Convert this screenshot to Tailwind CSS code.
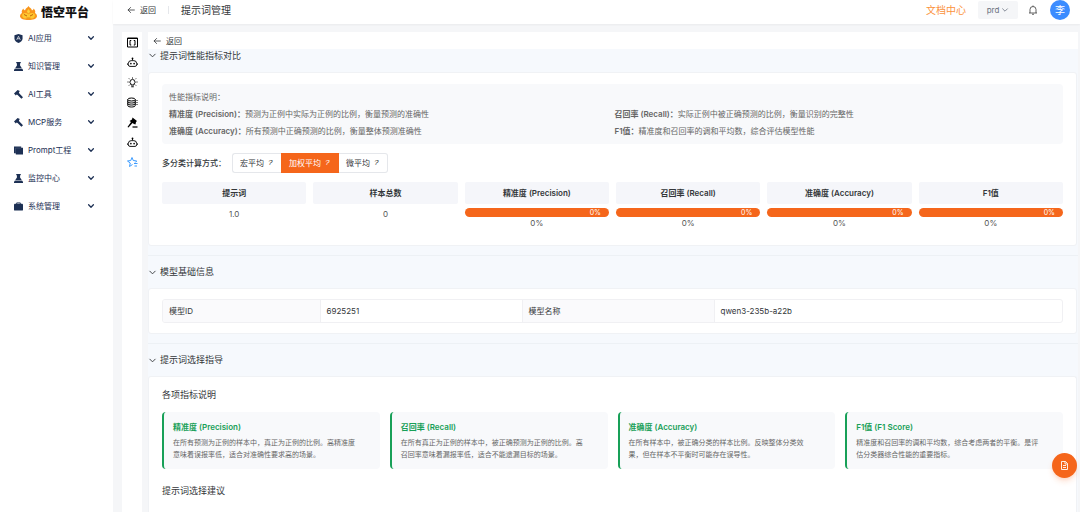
<!DOCTYPE html>
<html lang="zh-CN">
<head>
    <meta charset="UTF-8">
    <meta name="viewport" content="width=device-width, initial-scale=1.0">
    <title>悟空平台 - 提示词管理</title>
    <script src="https://cdn.jsdelivr.net/npm/@tailwindcss/browser@4"></script>
</head>
<body class="flex min-h-screen bg-[#f5f6f8] font-['Inter','Noto_Sans_CJK_SC',sans-serif] text-[8px] leading-3 text-[#333639]">
    <!-- Shared icons -->
    <svg class="hidden">
        <symbol id="chevron" viewBox="0 0 10 10"><path d="M2 3.5l3 3 3-3" fill="none" stroke="currentColor" stroke-linecap="round" stroke-linejoin="round"/></symbol>
        <symbol id="arrow" viewBox="0 0 10 10"><path d="M9.2 5H1.5M4.5 1.8L1.3 5l3.2 3.2" fill="none" stroke="currentColor" stroke-linecap="round" stroke-linejoin="round"/></symbol>
        <symbol id="hammer" viewBox="0 0 20 20"><path d="M0 8L8 0l5 2-2 3 .5 2L20 16l-3.500 3.500L8 11l-2-1-2 2z" fill="currentColor"/></symbol>
        <symbol id="flask" viewBox="0 0 20 20"><path d="M5 0h10v2.500h-1.500V8l4 6h-15l4-6V2.500H5zM1.500 15h17L20 17.500V20H0v-2.500z" fill="currentColor"/></symbol>
        <symbol id="robot" viewBox="0 0 24 24"><path d="M12 7V3M6.500 20.500h11a3.500 3.500 0 0 0 3.500-3.500v-3a6 6 0 0 0-6-6H9a6 6 0 0 0-6 6v3a3.500 3.500 0 0 0 3.500 3.500zM1 14v3M23 14v3" fill="none" stroke="currentColor" stroke-width="2"/><circle cx="12" cy="3" r="2" fill="currentColor"/><circle cx="8.500" cy="14.500" r="1.800" fill="currentColor"/><circle cx="15.500" cy="14.500" r="1.800" fill="currentColor"/></symbol>
    </svg>

    <!-- Sidebar -->
    <aside class="w-[113px] shrink-0 bg-white">
        <div class="flex h-6 items-center gap-1 pl-5 pt-[2px]">
            <svg class="h-[14px] w-[17px]" viewBox="0 0 34 28">
                <path d="M17 0c2 4 6 4 7 9 2-1 3-2 3-4 4 4 4 6 3 9 3 2 4 4 4 7-1 5-8 7-17 7S1 26 0 21c0-3 1-5 4-7-1-3-1-5 3-9 0 2 1 3 3 4 1-5 5-5 7-9z" fill="#f9951b"/>
                <path d="M5 16c4-3 9-2 12 1 3-3 8-4 12-1 2 4 0 8-4 9H9c-4-1-6-5-4-9z" fill="#fdc82f"/>
                <path d="M8 17l6 3M26 17l-6 3" stroke="#c2650f" stroke-width="2" fill="none"/>
                <path d="M13 24h8" stroke="#e07b12" stroke-width="1.500"/>
                <path d="M17 6c1 2 3 3 3 6l-3 3-3-3c0-3 2-4 3-6z" fill="#fdd23c"/>
            </svg>
            <span class="text-xs font-black text-[#111]">悟空平台</span>
        </div>
        <nav class="text-[#1d3054]">
            <a href="#" class="flex h-7 items-center pl-[14px] pr-[18px]">
                <svg class="mr-[5px] size-[9px]" viewBox="0 0 20 20"><path d="M10 0l9 3v7c0 5-4 8-9 10-5-2-9-5-9-10V3z" fill="currentColor"/><path d="M6 13l4-8 4 8M7.500 10.500h5" stroke="#fff" stroke-width="1.500" fill="none"/></svg>
                <span class="flex-1">AI应用</span>
                <svg class="size-2" stroke-width="1.600"><use href="#chevron"/></svg>
            </a>
            <a href="#" class="flex h-7 items-center pl-[14px] pr-[18px]">
                <svg class="mr-[5px] size-[9px]"><use href="#flask"/></svg>
                <span class="flex-1">知识管理</span>
                <svg class="size-2" stroke-width="1.600"><use href="#chevron"/></svg>
            </a>
            <a href="#" class="flex h-7 items-center pl-[14px] pr-[18px]">
                <svg class="mr-[5px] size-[9px]"><use href="#hammer"/></svg>
                <span class="flex-1">AI工具</span>
                <svg class="size-2" stroke-width="1.600"><use href="#chevron"/></svg>
            </a>
            <a href="#" class="flex h-7 items-center pl-[14px] pr-[18px]">
                <svg class="mr-[5px] size-[9px]"><use href="#hammer"/></svg>
                <span class="flex-1">MCP服务</span>
                <svg class="size-2" stroke-width="1.600"><use href="#chevron"/></svg>
            </a>
            <a href="#" class="flex h-7 items-center pl-[14px] pr-[18px]">
                <svg class="mr-[5px] size-[9px]" viewBox="0 0 20 20"><path d="M0 1h16v3h4v15H4v-3H0z" fill="currentColor"/><path d="M3.500 16V4.500H16" stroke="#5b6a86" fill="none"/></svg>
                <span class="flex-1">Prompt工程</span>
                <svg class="size-2" stroke-width="1.600"><use href="#chevron"/></svg>
            </a>
            <a href="#" class="flex h-7 items-center pl-[14px] pr-[18px]">
                <svg class="mr-[5px] size-[9px]"><use href="#flask"/></svg>
                <span class="flex-1">监控中心</span>
                <svg class="size-2" stroke-width="1.600"><use href="#chevron"/></svg>
            </a>
            <a href="#" class="flex h-7 items-center pl-[14px] pr-[18px]">
                <svg class="mr-[5px] size-[9px]" viewBox="0 0 20 20"><rect y="4" width="20" height="15" rx="2" fill="currentColor"/><path d="M6 5V2h8v3" stroke="currentColor" stroke-width="2" fill="none"/></svg>
                <span class="flex-1">系统管理</span>
                <svg class="size-2" stroke-width="1.600"><use href="#chevron"/></svg>
            </a>
        </nav>
    </aside>

    <div class="flex min-w-0 flex-1 flex-col">
        <!-- Header -->
        <header class="flex h-6 items-center bg-white pb-1 pl-[14px] pr-[10px] shadow-xs">
            <button class="flex items-center gap-[5px]"><svg class="size-2"><use href="#arrow"/></svg>返回</button>
            <span class="mx-3 h-2 w-px bg-[#e5e7eb]"></span>
            <h1 class="text-[10px]">提示词管理</h1>
            <a href="#" class="ml-auto text-[10px] text-[#fb923c]">文档中心</a>
            <button class="ml-3 flex h-[18px] w-10 items-center justify-center gap-[2px] rounded-xs bg-[#f5f6f8] text-[#6b7280]">prd<svg class="size-2"><use href="#chevron"/></svg></button>
            <button class="ml-2 p-[2px]" aria-label="通知">
                <svg class="size-[10px]" viewBox="0 0 20 20" fill="none" stroke="#444" stroke-width="1.700"><path d="M2 16h16M4 16V9a6 6 0 0 1 12 0v7M10 3V1M8 18.500h4"/></svg>
            </button>
            <span class="ml-[10px] flex size-5 items-center justify-center rounded-full bg-[#3b8cff] text-[10px] text-white">李</span>
        </header>

        <div class="flex flex-1 pl-[9px] pr-[2px] pt-2">
            <!-- Tool rail -->
            <nav class="flex w-5 shrink-0 flex-col items-center bg-white text-black">
                <a href="#" class="flex h-5 items-center" aria-label="变量"><svg class="size-[11px]" viewBox="0 0 22 22" fill="none" stroke="currentColor" stroke-width="2"><path d="M1 2h20v18H1zM1 3h20M8.500 7H6v9h2.500M13.500 7H16v9h-2.500"/></svg></a>
                <a href="#" class="flex h-5 items-center" aria-label="智能体"><svg class="size-[11px]"><use href="#robot"/></svg></a>
                <a href="#" class="flex h-5 items-center" aria-label="提示"><svg class="size-[11px]" viewBox="0 0 22 22" fill="none" stroke="currentColor" stroke-width="2"><path d="M8 16v-2a5 5 0 1 1 6 0v2zM8.500 19.500h5M11 1v2M1 10h2M19 10h2M4 3l1.500 1.500M18 3l-1.500 1.500M4 17l1.500-1.500M18 17l-1.500-1.500"/></svg></a>
                <a href="#" class="flex h-5 items-center" aria-label="数据"><svg class="size-[11px]" viewBox="0 0 22 22" fill="none" stroke="currentColor" stroke-width="2"><ellipse cx="9" cy="5" rx="7.500" ry="3"/><path d="M1.500 5v12c0 4 15 4 15 0V5M1.500 9c0 4 15 4 15 0M1.500 13c0 4 15 4 15 0M19 7h2M19 11h2M19 15h2"/></svg></a>
                <a href="#" class="flex h-5 items-center" aria-label="评测"><svg class="size-[11px]" viewBox="0 0 22 22"><path d="M11 1l9 7-2 2-1 5-3-1-3-2-8 9-2-1 7-10-3-2 5-3z" fill="currentColor"/><path d="M11 20h10" stroke="currentColor" stroke-width="2.500"/></svg></a>
                <a href="#" class="flex h-5 items-center" aria-label="机器人"><svg class="size-[11px]"><use href="#robot"/></svg></a>
                <a href="#" class="flex h-5 items-center text-[#3b9bff]" aria-label="收藏"><svg class="size-[11px]" viewBox="0 0 22 22" fill="none" stroke="currentColor" stroke-width="2" stroke-linejoin="round"><path d="M11 15l-6 4 1.500-7L1 8l6.500-1L10 1l2.500 6 7 1-3 3M14 13h7M15 18h5"/></svg></a>
            </nav>

            <!-- Content -->
            <main class="ml-[6px] flex min-w-0 flex-1 flex-col bg-[#f6f9fd]">
                <div class="flex h-[17px] items-center bg-white pl-[5px]">
                    <button class="flex items-center gap-[5px]"><svg class="size-2"><use href="#arrow"/></svg>返回</button>
                </div>

                <!-- Metric comparison -->
                <section class="pb-[9px]">
                    <button class="flex h-[23px] items-start gap-[3px] text-[9px] leading-[14px]"><svg class="mt-[2px] size-[9px]"><use href="#chevron"/></svg>提示词性能指标对比</button>
                    <div class="mr-px rounded-[3px] border border-[#f0f2f5] bg-white px-[13px] pb-4 pt-[11px]">
                        <div class="rounded-sm bg-[#f8f9fb] px-[7px] pb-[4px] pt-[5px] leading-[17px] text-[#666]">
                            <p>性能指标说明：</p>
                            <div class="grid grid-cols-2 gap-x-1">
                                <p><strong class="font-semibold">精准度 (Precision)：</strong>预测为正例中实际为正例的比例，衡量预测的准确性</p>
                                <p><strong class="font-semibold">召回率 (Recall)：</strong>实际正例中被正确预测的比例，衡量识别的完整性</p>
                                <p><strong class="font-semibold">准确度 (Accuracy)：</strong>所有预测中正确预测的比例，衡量整体预测准确性</p>
                                <p><strong class="font-semibold">F1值：</strong>精准度和召回率的调和平均数，综合评估模型性能</p>
                            </div>
                        </div>

                        <div class="mt-[9px] flex h-5 items-center" role="radiogroup" aria-labelledby="averageLabel">
                            <span id="averageLabel" class="w-[70px] font-medium">多分类计算方式：</span>
                            <label class="flex h-full items-center gap-1 rounded-l-[3px] border border-r-0 border-[#e5e7eb] px-[7px]">
                                <input type="radio" name="average" class="sr-only">宏平均<i class="w-[6px] font-['Liberation_Mono',monospace]">?</i>
                            </label>
                            <label class="flex h-full items-center gap-1 bg-[#f5661b] px-2 text-white">
                                <input type="radio" name="average" class="sr-only" checked>加权平均<i class="w-[6px] font-['Liberation_Mono',monospace]">?</i>
                            </label>
                            <label class="flex h-full items-center gap-1 rounded-r-[3px] border border-l-0 border-[#e5e7eb] px-[7px]">
                                <input type="radio" name="average" class="sr-only">微平均<i class="w-[6px] font-['Liberation_Mono',monospace]">?</i>
                            </label>
                        </div>

                        <div class="-mx-[7px] mt-[9px]">
                            <table class="w-full table-fixed border-separate border-spacing-x-[7px] border-spacing-y-0 text-center">
                                <thead>
                                    <tr class="h-[22px]">
                                        <th class="rounded-xs bg-[#f5f6fa] font-semibold">提示词</th>
                                        <th class="rounded-xs bg-[#f5f6fa] font-semibold">样本总数</th>
                                        <th class="rounded-xs bg-[#f5f6fa] font-semibold">精准度 (Precision)</th>
                                        <th class="rounded-xs bg-[#f5f6fa] font-semibold">召回率 (Recall)</th>
                                        <th class="rounded-xs bg-[#f5f6fa] font-semibold">准确度 (Accuracy)</th>
                                        <th class="rounded-xs bg-[#f5f6fa] font-semibold">F1值</th>
                                    </tr>
                                </thead>
                                <tbody>
                                    <tr class="align-top text-[#555]">
                                        <td class="pt-1">1.0</td>
                                        <td class="pt-1">0</td>
                                        <td class="pt-1"><div class="h-[9px] rounded-full bg-[#f5661b] pr-2 text-right text-[7px] leading-[9px] text-white">0%</div>0%</td>
                                        <td class="pt-1"><div class="h-[9px] rounded-full bg-[#f5661b] pr-2 text-right text-[7px] leading-[9px] text-white">0%</div>0%</td>
                                        <td class="pt-1"><div class="h-[9px] rounded-full bg-[#f5661b] pr-2 text-right text-[7px] leading-[9px] text-white">0%</div>0%</td>
                                        <td class="pt-1"><div class="h-[9px] rounded-full bg-[#f5661b] pr-2 text-right text-[7px] leading-[9px] text-white">0%</div>0%</td>
                                    </tr>
                                </tbody>
                            </table>
                        </div>
                    </div>
                </section>

                <!-- Model info -->
                <section class="border-t border-[#edf1f5] pb-[9px]">
                    <button class="flex h-8 items-center gap-[3px] text-[9px]"><svg class="size-[9px]"><use href="#chevron"/></svg>模型基础信息</button>
                    <div class="mr-px rounded-[3px] border border-[#f0f2f5] bg-white px-[13px] py-[10px]">
                        <div class="overflow-hidden rounded-[3px] border border-[#f0f0f3]">
                            <table class="w-full table-fixed text-left">
                                <tr class="h-[22px]">
                                    <th class="w-[35%] bg-[#fafafc] px-[6px] font-normal md:w-[157px]">模型ID</th>
                                    <td class="border-l border-[#f0f0f3] px-[6px] md:w-[202px]">6925251</td>
                                    <th class="border-l border-[#f0f0f3] bg-[#fafafc] px-[6px] font-normal md:w-[192px]">模型名称</th>
                                    <td class="border-l border-[#f0f0f3] px-[6px]">qwen3-235b-a22b</td>
                                </tr>
                            </table>
                        </div>
                    </div>
                </section>

                <!-- Selection guide -->
                <section class="flex flex-1 flex-col border-t border-[#edf1f5]">
                    <button class="flex h-8 items-center gap-[3px] text-[9px]"><svg class="size-[9px]"><use href="#chevron"/></svg>提示词选择指导</button>
                    <div class="mr-px flex-1 rounded-t-[3px] border border-b-0 border-[#f0f2f5] bg-white px-[13px] pb-2 pt-3">
                        <h2 class="text-[9px]">各项指标说明</h2>
                        <div class="mt-[11px] grid grid-cols-4 gap-[10px] text-[7px] text-[#666]">
                            <div class="rounded-sm border-l-2 border-[#18a058] bg-[#f8f9fb] px-[9px] pb-2 pt-[9px]">
                                <h3 class="mb-1 text-[8px] font-semibold text-[#18a058]">精准度 (Precision)</h3>
                                <p>在所有预测为正例的样本中，真正为正例的比例。高精准度<br>意味着误报率低，适合对准确性要求高的场景。</p>
                            </div>
                            <div class="rounded-sm border-l-2 border-[#18a058] bg-[#f8f9fb] px-[9px] pb-2 pt-[9px]">
                                <h3 class="mb-1 text-[8px] font-semibold text-[#18a058]">召回率 (Recall)</h3>
                                <p>在所有真正为正例的样本中，被正确预测为正例的比例。高<br>召回率意味着漏报率低，适合不能遗漏目标的场景。</p>
                            </div>
                            <div class="rounded-sm border-l-2 border-[#18a058] bg-[#f8f9fb] px-[9px] pb-2 pt-[9px]">
                                <h3 class="mb-1 text-[8px] font-semibold text-[#18a058]">准确度 (Accuracy)</h3>
                                <p>在所有样本中，被正确分类的样本比例。反映整体分类效<br>果，但在样本不平衡时可能存在误导性。</p>
                            </div>
                            <div class="rounded-sm border-l-2 border-[#18a058] bg-[#f8f9fb] px-[9px] pb-2 pt-[9px]">
                                <h3 class="mb-1 text-[8px] font-semibold text-[#18a058]">F1值 (F1 Score)</h3>
                                <p>精准度和召回率的调和平均数，综合考虑两者的平衡。是评<br>估分类器综合性能的重要指标。</p>
                            </div>
                        </div>
                        <h2 class="mt-4 text-[9px]">提示词选择建议</h2>
                    </div>
                </section>
            </main>
        </div>
    </div>

    <!-- Floating action -->
    <button class="fixed bottom-[34px] right-[3px] flex size-[25px] items-center justify-center rounded-full bg-[#f5661b] shadow-md shadow-[#f5661b]/20" aria-label="文档">
        <svg class="size-[9px]" viewBox="0 0 18 18" fill="none" stroke="#fff" stroke-width="1.800"><path d="M3 1h8l4 4v12H3zM10 1v5h5M6 9h6M6 13h6"/></svg>
    </button>
</body>
</html>
